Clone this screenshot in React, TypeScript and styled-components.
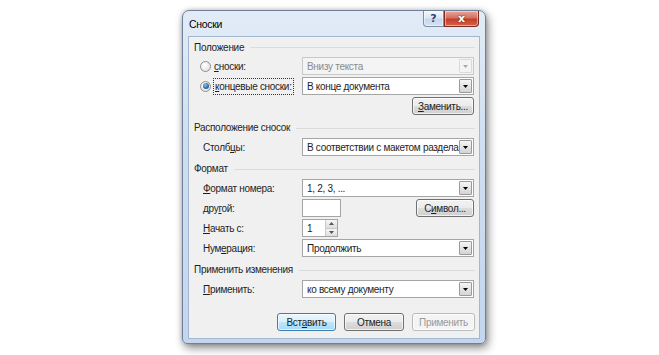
import styled, { createGlobalStyle } from "styled-components";

const GlobalStyle = createGlobalStyle`
  html, body { margin: 0; padding: 0; background: #ffffff; }
  body {
    font-family: "Liberation Sans", Arial, sans-serif;
    font-size: 10px;
    letter-spacing: -0.3px;
    color: #1e1e1e;
  }
`;

const Page = styled.div`
  width: 659px;
  height: 355px;
  padding: 10px 0 0 182px;
  box-sizing: border-box;
`;

const Window = styled.div`
  width: 304px;
  height: 334px;
  box-sizing: border-box;
  display: flex;
  flex-direction: column;
  padding: 0 5px 4px 5px;
  border: 1px solid #6f8099;
  border-radius: 7px 7px 5px 5px;
  background: linear-gradient(180deg, #e2ecf7 0%, #cfdff1 40%, #c3d6ee 100%);
  box-shadow: 2px 4px 10px rgba(0, 0, 0, 0.45), 0 0 4px rgba(0, 0, 0, 0.2);
`;

const TitleBar = styled.div`
  height: 25px;
  display: flex;
  align-items: flex-start;
`;

const Title = styled.div`
  align-self: center;
  padding-left: 1px;
  font-size: 10.5px;
  color: #000;
`;

const CaptionButtons = styled.div`
  margin-left: auto;
  margin-right: 1px;
  display: flex;
`;

const CaptionButton = styled.div<{ $close?: boolean }>`
  width: ${(p) => (p.$close ? 35 : 21)}px;
  height: 16px;
  box-sizing: border-box;
  display: flex;
  align-items: center;
  justify-content: center;
  border: 1px solid ${(p) => (p.$close ? "#7d2a22" : "#7e90a8")};
  border-top: none;
  border-radius: ${(p) => (p.$close ? "0 0 4px 0" : "0 0 0 4px")};
  background: ${(p) =>
    p.$close
      ? "linear-gradient(180deg, #e8a79c 0%, #d7705f 45%, #c2402b 55%, #d5624b 100%)"
      : "linear-gradient(180deg, #f4f8fc 0%, #dce7f3 45%, #c6d6ea 55%, #d7e3f1 100%)"};
  color: ${(p) => (p.$close ? "#fff" : "#27446b")};
  font-family: "DejaVu Sans", sans-serif;
  font-weight: bold;
  font-size: 11px;
  letter-spacing: 0;
  text-shadow: ${(p) => (p.$close ? "0 0 2px #5a1008" : "0 0 1px #fff")};
  box-shadow: inset 0 0 0 1px rgba(255, 255, 255, 0.45);
`;

const Client = styled.div`
  flex: 1;
  display: flex;
  flex-direction: column;
  background: #f0f0f0;
  border: 1px solid #a3b7d1;
  padding: 0 4px 6px 0;
`;

const Header = styled.div<{ $first?: boolean }>`
  height: ${(p) => (p.$first ? 20 : 21)}px;
  margin-top: ${(p) => (p.$first ? 0 : 2)}px;
  display: flex;
  align-items: center;
  padding-left: 5px;
  &::after {
    content: "";
    flex: 1;
    height: 0;
    border-top: 1px solid #dcdcdc;
    margin: 1px 0 0 6px;
  }
`;

const Row = styled.div<{ $first?: boolean }>`
  display: grid;
  grid-template-columns: 99px 172px;
  height: 18px;
  margin-top: ${(p) => (p.$first ? 0 : 2)}px;
  padding-left: 14px;
  align-items: center;
`;

const Label = styled.span`
  white-space: nowrap;
`;

const RadioLabel = styled.label`
  display: flex;
  align-items: center;
  margin-left: -3px;
  white-space: nowrap;
`;

const Radio = styled.span<{ $checked?: boolean }>`
  width: 11px;
  height: 11px;
  border-radius: 50%;
  box-sizing: border-box;
  border: 1px solid #8f8f8f;
  background: radial-gradient(circle at 40% 35%, #ffffff 0%, #e6e6e6 70%, #d0d0d0 100%);
  display: flex;
  align-items: center;
  justify-content: center;
  margin-right: 3px;
  &::after {
    content: "";
    display: ${(p) => (p.$checked ? "block" : "none")};
    width: 6px;
    height: 6px;
    border-radius: 50%;
    background: radial-gradient(circle at 40% 35%, #8fc2ec 0%, #2e6ea8 55%, #173f6a 100%);
  }
`;

const Focus = styled.span`
  outline: 1px dotted #333;
  outline-offset: 0;
  padding: 0 1px;
  line-height: 15px;
`;

const Combo = styled.div<{ $disabled?: boolean }>`
  height: 18px;
  box-sizing: border-box;
  display: flex;
  align-items: center;
  border: 1px solid ${(p) => (p.$disabled ? "#c8c8c8" : "#a5a5a5")};
  background: ${(p) => (p.$disabled ? "#f4f4f4" : "#ffffff")};
  color: ${(p) => (p.$disabled ? "#8a8a8a" : "#1e1e1e")};
`;

const ComboText = styled.span`
  flex: 1;
  padding-left: 4px;
  white-space: nowrap;
  overflow: hidden;
`;

const ArrowBox = styled.span<{ $disabled?: boolean }>`
  width: 13px;
  height: 14px;
  margin-right: 1px;
  box-sizing: border-box;
  display: flex;
  align-items: center;
  justify-content: center;
  border: 1px solid ${(p) => (p.$disabled ? "#dadada" : "#9a9a9a")};
  border-radius: 1px;
  background: ${(p) =>
    p.$disabled ? "#f4f4f4" : "linear-gradient(180deg, #f6f6f6 0%, #e4e4e4 50%, #d4d4d4 100%)"};
`;

const Field = styled.div<{ $w: number }>`
  width: ${(p) => p.$w}px;
  height: 18px;
  box-sizing: border-box;
  border: 1px solid #a5a5a5;
  background: #fff;
  display: flex;
  align-items: center;
`;

const FieldText = styled.span`
  flex: 1;
  padding-left: 4px;
`;

const Spin = styled.div`
  width: 11px;
  height: 16px;
  display: flex;
  flex-direction: column;
  border-left: 1px solid #c9c9c9;
`;

const SpinPart = styled.span`
  flex: 1;
  display: flex;
  align-items: center;
  justify-content: center;
  background: linear-gradient(180deg, #f6f6f6, #dedede);
  border-bottom: 1px solid #c9c9c9;
  &:last-child { border-bottom: none; }
`;

const Split = styled.div`
  display: flex;
  justify-content: space-between;
  align-items: center;
`;

const Button = styled.div<{ $w: number; $disabled?: boolean; $default?: boolean }>`
  width: ${(p) => p.$w}px;
  height: 18px;
  box-sizing: border-box;
  display: flex;
  align-items: center;
  justify-content: center;
  border-radius: 3px;
  white-space: nowrap;
  border: 1px solid ${(p) => (p.$disabled ? "#b9bcbe" : p.$default ? "#3c7fb1" : "#707070")};
  color: ${(p) => (p.$disabled ? "#9a9a9a" : "#1e1e1e")};
  background: ${(p) =>
    p.$disabled
      ? "#f4f4f4"
      : p.$default
      ? "linear-gradient(180deg, #eaf6fd 0%, #d9f0fc 50%, #bee6fd 51%, #a7d9f5 100%)"
      : "linear-gradient(180deg, #f2f2f2 0%, #ebebeb 50%, #dddddd 51%, #cfcfcf 100%)"};
  box-shadow: inset 0 0 0 1px rgba(255, 255, 255, 0.7);
`;

const RightButton = styled(Button)`
  justify-self: end;
`;

const Footer = styled.div`
  margin-top: 15px;
  display: flex;
  justify-content: flex-end;
  gap: 8px;
`;

const Arrow = ({ up, color = "#000" }: { up?: boolean; color?: string }) => (
  <svg width="5" height="3" viewBox="0 0 5 3">
    <path d={up ? "M0 3 L5 3 L2.5 0 Z" : "M0 0 L5 0 L2.5 3 Z"} fill={color} />
  </svg>
);

const DropDown = ({ text, disabled }: { text: string; disabled?: boolean }) => (
  <Combo $disabled={disabled}>
    <ComboText>{text}</ComboText>
    <ArrowBox $disabled={disabled}>
      <Arrow color={disabled ? "#a8a8a8" : "#000"} />
    </ArrowBox>
  </Combo>
);

export default function App() {
  return (
    <Page>
      <GlobalStyle />
      <Window>
        <TitleBar>
          <Title>Сноски</Title>
          <CaptionButtons>
            <CaptionButton>?</CaptionButton>
            <CaptionButton $close>x</CaptionButton>
          </CaptionButtons>
        </TitleBar>
        <Client>
          <Header $first>Положение</Header>
          <Row $first>
            <RadioLabel>
              <Radio />
              <span><u>с</u>носки:</span>
            </RadioLabel>
            <DropDown text="Внизу текста" disabled />
          </Row>
          <Row>
            <RadioLabel>
              <Radio $checked />
              <Focus><u>к</u>онцевые сноски:</Focus>
            </RadioLabel>
            <DropDown text="В конце документа" />
          </Row>
          <Row>
            <span />
            <RightButton $w={62}><u>З</u>аменить...</RightButton>
          </Row>

          <Header>Расположение сносок</Header>
          <Row $first>
            <Label>Столб<u>ц</u>ы:</Label>
            <DropDown text="В соответствии с макетом раздела" />
          </Row>

          <Header>Формат</Header>
          <Row $first>
            <Label><u>Ф</u>ормат номера:</Label>
            <DropDown text="1, 2, 3, ..." />
          </Row>
          <Row>
            <Label>дру<u>г</u>ой:</Label>
            <Split>
              <Field $w={39} />
              <Button $w={58}>С<u>и</u>мвол...</Button>
            </Split>
          </Row>
          <Row>
            <Label><u>Н</u>ачать с:</Label>
            <Split>
              <Field $w={36}>
                <FieldText>1</FieldText>
                <Spin>
                  <SpinPart><Arrow up color="#555" /></SpinPart>
                  <SpinPart><Arrow color="#555" /></SpinPart>
                </Spin>
              </Field>
            </Split>
          </Row>
          <Row>
            <Label>Нум<u>е</u>рация:</Label>
            <DropDown text="Продолжить" />
          </Row>

          <Header>Применить изменения</Header>
          <Row $first>
            <Label><u>П</u>рименить:</Label>
            <DropDown text="ко всему документу" />
          </Row>

          <Footer>
            <Button $w={59} $default>Вст<u>а</u>вить</Button>
            <Button $w={60}>Отмена</Button>
            <Button $w={63} $disabled>Применить</Button>
          </Footer>
        </Client>
      </Window>
    </Page>
  );
}
